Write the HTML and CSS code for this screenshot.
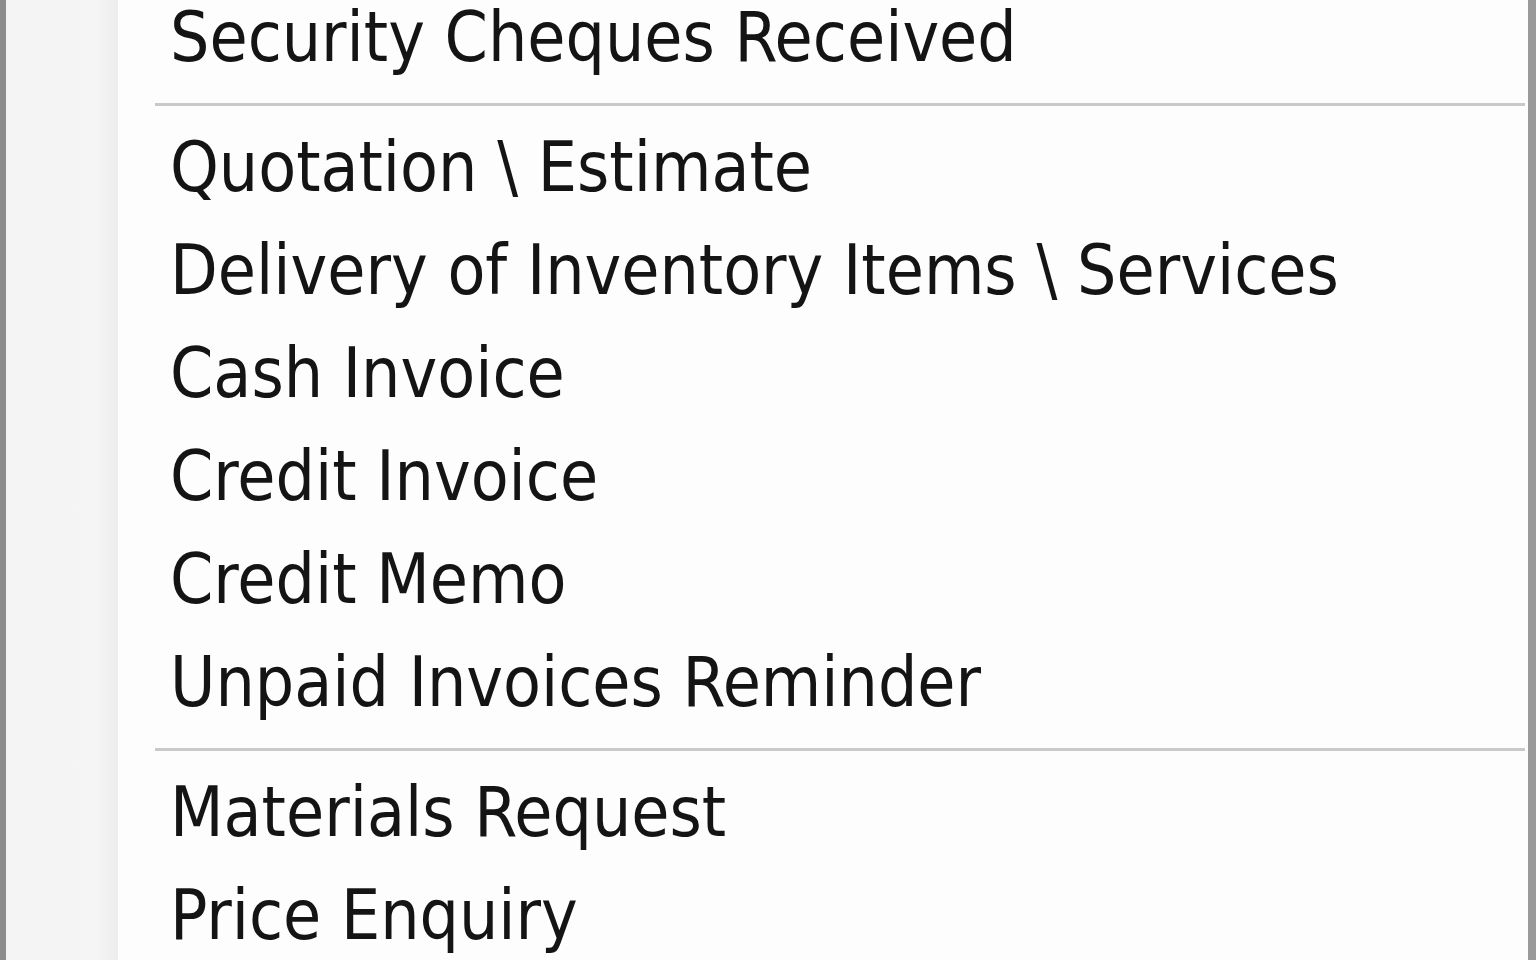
FILE: index.html
```html
<!DOCTYPE html>
<html lang="en">
<head>
  <meta charset="UTF-8" />
  <title>Menu</title>
  <link rel="stylesheet" href="styles.css">
</head>
<body>
  <div class="menu">
    <div class="gutter"></div>
    <ul class="items">
      <li class="item">Security Cheques Received</li>
      <li class="sep"></li>
      <li class="item">Quotation \ Estimate</li>
      <li class="item">Delivery of Inventory Items \ Services</li>
      <li class="item">Cash Invoice</li>
      <li class="item">Credit Invoice</li>
      <li class="item">Credit Memo</li>
      <li class="item">Unpaid Invoices Reminder</li>
      <li class="sep"></li>
      <li class="item">Materials Request</li>
      <li class="item">Price Enquiry</li>
    </ul>
  </div>
</body>
</html>
```

FILE: styles.css
```css
* {
  box-sizing: border-box;
  margin: 0;
  padding: 0;
}

html, body {
  width: 1536px;
  height: 960px;
  overflow: hidden;
  background: #fdfdfd;
}

.menu {
  display: flex;
  height: 960px;
  border-left: 6px solid #8c8c8c;
  border-right: 8px solid #9a9a9a;
  background: #fdfdfd;
}

.gutter {
  width: 112px;
  flex-shrink: 0;
  background: linear-gradient(90deg, #f3f3f3 0%, #f5f5f5 80%, #ededed 100%);
}

.items {
  list-style: none;
  flex: 1;
  margin-top: -14px;
  font-family: "DejaVu Sans Condensed", "DejaVu Sans", sans-serif;
  font-stretch: condensed;
  font-size: 69px;
  color: #141414;
}

.item {
  height: 103px;
  line-height: 103px;
  padding-left: 52px;
  white-space: nowrap;
}

.sep {
  height: 27px;
  display: flex;
  align-items: center;
  padding-top: 3px;
  margin-left: 37px;
  margin-right: 3px;
}

.sep::before {
  content: "";
  flex: 1;
  height: 3px;
  background: #c9c9c9;
}
```
